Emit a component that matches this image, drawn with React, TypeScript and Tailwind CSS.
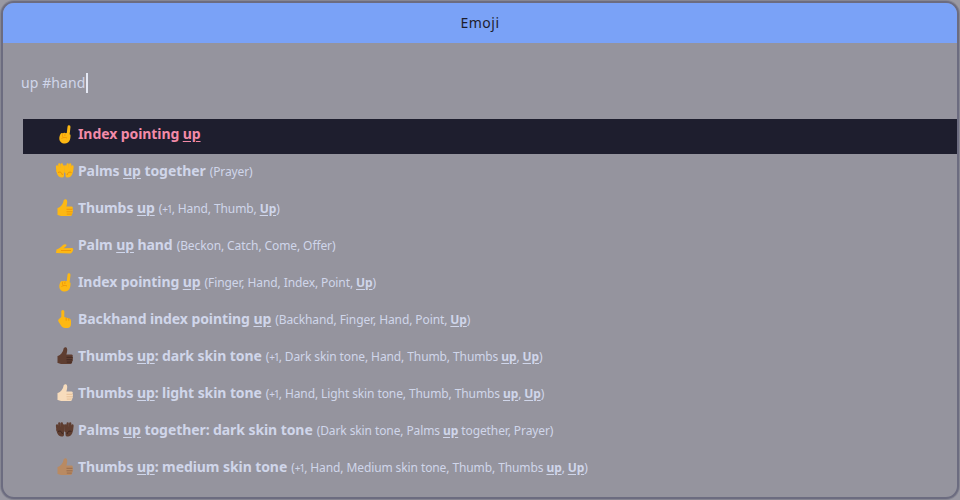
import React from 'react';

type Tone = { base: string; shade: string };

const YELLOW: Tone = { base: '#fdb813', shade: '#ee9304' };
const DARK: Tone = { base: '#5e3d30', shade: '#3d2620' };
const LIGHT: Tone = { base: '#f7dcbc', shade: '#e4bd94' };
const MEDIUM: Tone = { base: '#b98a62', shade: '#94684a' };

function Thumb({ tone = YELLOW }: { tone?: Tone }) {
  return (
    <svg viewBox="0 0 20 20" className="h-5 w-5 shrink-0">
      <path
        d="M2.500 10C5 9.500 8 6.500 8.500 3c.2-1.500 1.500-2.200 2.500-1.700 1.500.7 1.500 3.200.8 5.700l-.4 1.500h5.100c1.300 0 1.600 1.500 1 2.300.7.500.7 2 0 2.500.6.700.4 2-.4 2.400.3 1.100-.5 2.300-1.600 2.300H8c-2.500 0-3.500-.5-5.500-1z"
        fill={tone.base}
      />
      <path d="M11.500 11.300h6M11.500 13.800h6M11.800 16.100h5" stroke={tone.shade} strokeWidth="0.9" fill="none" />
    </svg>
  );
}

function PalmHand({ tone }: { tone: Tone }) {
  return (
    <g>
      <path d="M1.500 9c0 4 1.500 7 5 7.500 1.500.2 2.500-.5 2.500-2V9z" fill={tone.base} />
      <g stroke={tone.base} strokeWidth="2.300" strokeLinecap="round">
        <path d="M2.500 10 2 5.500M4.500 10l-.2-6.500M6.700 10l.1-6.500M8.600 11l.2-5.500" />
      </g>
      <path d="M3 11.500c1.800-1 3.800-.2 4.500 2.500" stroke={tone.shade} strokeWidth="1" fill="none" />
    </g>
  );
}

function Palms({ tone = YELLOW }: { tone?: Tone }) {
  return (
    <svg viewBox="0 0 20 20" className="h-5 w-5 shrink-0">
      <PalmHand tone={tone} />
      <g transform="matrix(-1 0 0 1 19.500 0)">
        <PalmHand tone={tone} />
      </g>
    </svg>
  );
}

function PalmUp() {
  return (
    <svg viewBox="0 0 20 20" className="h-5 w-5 shrink-0">
      <path
        d="M1 18l.5-3.500C4 13.500 6 12 8 10c1-1 3-1 3.500-.2.3.8-.5 1.600-2 2.700l-1 .8 8.500-.3c1.300 0 1.500 1.500 1 2.500-.5 1.500-1.500 3-3 3z"
        fill={YELLOW.base}
      />
      <path d="M6 15.500h10" stroke={YELLOW.shade} strokeWidth="0.9" fill="none" />
    </svg>
  );
}

function PointUp() {
  return (
    <svg viewBox="0 0 20 20" className="h-5 w-5 shrink-0">
      <path d="M13 11.500 14 2.800" stroke={YELLOW.base} strokeWidth="3" strokeLinecap="round" />
      <path
        d="M5.500 10c.5-1 1.700-1.200 2.300-.5.600-.8 1.800-.9 2.400-.2.700-.6 2-.4 2.700.5l2.600 1c.3 5-1.500 8.500-5.500 8.700-3.500.1-5.700-2-5.700-5 0-1.800.5-3 1.200-4.500z"
        fill={YELLOW.base}
      />
      <path d="M7.800 9.800c-.5 1-.5 2 0 3M10.200 9.500c-.5 1-.5 2 0 2.500M6.500 14.500c1.500-1.200 3.800-1.400 5.500-.5" stroke={YELLOW.shade} strokeWidth="0.9" fill="none" />
    </svg>
  );
}

function Backhand() {
  return (
    <svg viewBox="0 0 20 20" className="h-5 w-5 shrink-0">
      <path d="M7.800 9.500V2.500" stroke={YELLOW.base} strokeWidth="3" strokeLinecap="round" />
      <path
        d="M6.300 8 3.700 10.300c-.7.800-.6 1.800 0 2.700l2.300 3.500c1 1.600 2.200 2.500 4 2.500h2.500c2 0 3.500-1.600 3.500-4v-3c0-1.500-.8-2.300-2-2.500L9.300 8z"
        fill={YELLOW.base}
      />
      <path d="M11.200 8.700v3M13.800 9.200v2.500" stroke={YELLOW.shade} strokeWidth="0.9" fill="none" />
    </svg>
  );
}

function Up({ children = 'up' }: { children?: React.ReactNode }) {
  return <u className="font-bold underline-offset-2">{children}</u>;
}

function PlusOne() {
  return <span className="text-[10px] tracking-[-1px]">+1</span>;
}

function Row({
  icon,
  selected,
  children,
}: {
  icon: React.ReactNode;
  selected?: boolean;
  children: React.ReactNode;
}) {
  return (
    <div
      className={`flex h-[35px] items-center gap-[3px] pb-[5px] pl-8 whitespace-nowrap ${
        selected ? 'bg-[#1e1e2e] text-[#f38ba8]' : 'text-[#d0d6ea]'
      }`}
    >
      {icon}
      <div className="leading-5">{children}</div>
    </div>
  );
}

function Name({ children }: { children: React.ReactNode }) {
  return <span className="text-[14px] font-bold tracking-[-0.08px]">{children}</span>;
}

function Tags({ children }: { children?: React.ReactNode }) {
  return <span className="ml-1 text-[12px] tracking-[-0.1px]">{children}</span>;
}

export default function App() {
  return (
    <div className="h-[500px] w-[960px] bg-[#9a99a3] font-['Noto_Sans','Open_Sans',sans-serif]">
      <div className="h-full rounded-[14px] bg-[#868692] p-px">
        <div className="flex h-full flex-col overflow-hidden rounded-[13px] border-2 border-[#6c6c80] bg-[#95949e]">
          <div className="flex h-10 shrink-0 items-center justify-center bg-[#7aa2f7] pb-px text-[14px] tracking-[0.5px] text-[#1e1e2e]">
            Emoji
          </div>
          <div className="flex h-[76px] shrink-0 items-center pt-[4px] pl-[18px] text-[14px] tracking-[0.1px] text-[#d0d6ea]">
            <span className="-translate-y-px">up #hand</span>
            <span className="h-[20px] w-[2px] bg-[#e4e8f4]" />
          </div>
          <div className="flex flex-col gap-[2px] pl-5">
            <Row selected icon={<PointUp />}>
              <Name>Index pointing <Up /></Name>
              <Tags />
            </Row>
            <Row icon={<Palms />}>
              <Name>Palms <Up /> together</Name>
              <Tags>(Prayer)</Tags>
            </Row>
            <Row icon={<Thumb />}>
              <Name>Thumbs <Up /></Name>
              <Tags>(<PlusOne />, Hand, Thumb, <Up>Up</Up>)</Tags>
            </Row>
            <Row icon={<PalmUp />}>
              <Name>Palm <Up /> hand</Name>
              <Tags>(Beckon, Catch, Come, Offer)</Tags>
            </Row>
            <Row icon={<PointUp />}>
              <Name>Index pointing <Up /></Name>
              <Tags>(Finger, Hand, Index, Point, <Up>Up</Up>)</Tags>
            </Row>
            <Row icon={<Backhand />}>
              <Name>Backhand index pointing <Up /></Name>
              <Tags>(Backhand, Finger, Hand, Point, <Up>Up</Up>)</Tags>
            </Row>
            <Row icon={<Thumb tone={DARK} />}>
              <Name>Thumbs <Up />: dark skin tone</Name>
              <Tags>(<PlusOne />, Dark skin tone, Hand, Thumb, Thumbs <Up />, <Up>Up</Up>)</Tags>
            </Row>
            <Row icon={<Thumb tone={LIGHT} />}>
              <Name>Thumbs <Up />: light skin tone</Name>
              <Tags>(<PlusOne />, Hand, Light skin tone, Thumb, Thumbs <Up />, <Up>Up</Up>)</Tags>
            </Row>
            <Row icon={<Palms tone={DARK} />}>
              <Name>Palms <Up /> together: dark skin tone</Name>
              <Tags>(Dark skin tone, Palms <Up /> together, Prayer)</Tags>
            </Row>
            <Row icon={<Thumb tone={MEDIUM} />}>
              <Name>Thumbs <Up />: medium skin tone</Name>
              <Tags>(<PlusOne />, Hand, Medium skin tone, Thumb, Thumbs <Up />, <Up>Up</Up>)</Tags>
            </Row>
          </div>
        </div>
      </div>
    </div>
  );
}
